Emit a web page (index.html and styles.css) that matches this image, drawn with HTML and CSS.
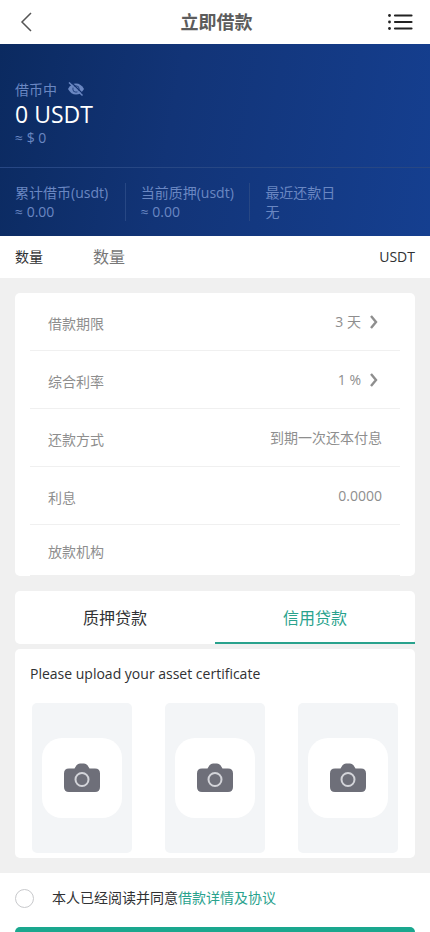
FILE: index.html
```html
<!DOCTYPE html>
<html lang="zh-CN">
<head>
<meta charset="utf-8">
<meta name="viewport" content="width=device-width, initial-scale=1">
<title>立即借款</title>
<link rel="stylesheet" href="styles.css">
</head>
<body>
<svg class="symbols" aria-hidden="true">
  <symbol id="camera" viewBox="0 0 36 30">
    <path fill="#6e6f79" d="M5 5.500h5.500l2-3.200Q14 .5 16 .5h4q2 0 3.500 1.800l2 3.200H31q5 0 5 5V24q0 5-5 5H5q-5 0-5-5V10.500q0-5 5-5z"/>
    <circle cx="18" cy="16.500" r="6.500" fill="none" stroke="#d3d4d9" stroke-width="2"/>
  </symbol>
  <symbol id="chevron" viewBox="0 0 8 14">
    <path d="M1 1l5 6-5 6" fill="none" stroke="#8e8e8e" stroke-width="2.400"/>
  </symbol>
</svg>
<div class="app">
  <header class="topbar">
    <button class="icon-button" type="button" aria-label="返回">
      <svg width="12" height="20" viewBox="0 0 12 20"><path d="M11 1L2 10l9 9" fill="none" stroke="#555" stroke-width="1.500"/></svg>
    </button>
    <h1>立即借款</h1>
    <button class="icon-button" type="button" aria-label="借款记录">
      <svg width="25" height="18" viewBox="0 0 25 18"><g stroke="#222" stroke-width="2.200" stroke-linecap="round"><path d="M7 2.500h16.500M7 9h16.500M7 15.500h16.500"/></g><g fill="#222"><circle cx="1.500" cy="2.500" r="1.400"/><circle cx="1.500" cy="9" r="1.400"/><circle cx="1.500" cy="15.500" r="1.400"/></g></svg>
    </button>
  </header>
  <main>
    <section class="hero">
      <div class="balance">
        <div class="balance-label">借币中
          <button class="eye" type="button" aria-label="隐藏金额">
            <svg width="16" height="16" viewBox="0 0 16 16"><path d="M0 7Q3 1.500 8 1.500T16 7Q13 12.500 8 12.500T0 7z" fill="#6a87c2"/><circle cx="8" cy="7" r="3.200" fill="none" stroke="#12316f" stroke-width=".8"/><path d="M2.400-.4L15.600 12.600" stroke="#12316f" stroke-width="1.400"/><path d="M1 .5L14.500 13.500" stroke="#6a87c2" stroke-width="1.500"/></svg>
          </button>
        </div>
        <strong>0 USDT</strong>
        <div>≈ $ 0</div>
      </div>
      <div class="stats">
        <div class="stat"><div>累计借币(usdt)</div><div>≈ 0.00</div></div>
        <div class="stat"><div>当前质押(usdt)</div><div>≈ 0.00</div></div>
        <div class="stat"><div>最近还款日</div><div>无</div></div>
      </div>
    </section>
    <div class="amount">
      <label for="amount">数量</label>
      <input id="amount" type="text" placeholder="数量">
      <span>USDT</span>
    </div>
    <section class="card terms">
      <div class="row"><span>借款期限</span><button class="value" type="button">3 天<svg width="8" height="14"><use href="#chevron"/></svg></button></div>
      <div class="row"><span>综合利率</span><button class="value" type="button">1 %<svg width="8" height="14"><use href="#chevron"/></svg></button></div>
      <div class="row"><span>还款方式</span><span class="value">到期一次还本付息</span></div>
      <div class="row"><span>利息</span><span class="value">0.0000</span></div>
      <div class="row last"><span>放款机构</span></div>
    </section>
    <div class="card tabs" role="tablist">
      <button type="button" role="tab" aria-selected="false">质押贷款</button>
      <button type="button" role="tab" aria-selected="true">信用贷款</button>
    </div>
    <section class="card upload">
      <h2>Please upload your asset certificate</h2>
      <div class="tiles">
        <button type="button" aria-label="上传图片 1"><span class="pad"><svg width="36" height="30"><use href="#camera"/></svg></span></button>
        <button type="button" aria-label="上传图片 2"><span class="pad"><svg width="36" height="30"><use href="#camera"/></svg></span></button>
        <button type="button" aria-label="上传图片 3"><span class="pad"><svg width="36" height="30"><use href="#camera"/></svg></span></button>
      </div>
    </section>
    <section class="confirm">
      <div class="agree">
        <input id="agree" type="checkbox">
        <div><label for="agree">本人已经阅读并同意</label><a href="#agreement">借款详情及协议</a></div>
      </div>
      <button class="submit" type="button" aria-label="立即借款"></button>
    </section>
  </main>
</div>
</body>
</html>
```
FILE: styles.css
```css
* {
  box-sizing: border-box;
}

body {
  margin: 0;
  background: #f0f0f0;
  color: #303133;
  font: 14px/20px "Open Sans", "Noto Sans CJK SC", sans-serif;
}

button,
input {
  font: inherit;
  color: inherit;
  padding: 0;
  border: 0;
  background: none;
}

button svg {
  display: block;
}

.symbols {
  display: none;
}

.app {
  display: flex;
  flex-direction: column;
  height: 100vh;
}

.topbar {
  display: grid;
  flex-shrink: 0;
  grid-template-columns: 1fr auto 1fr;
  align-items: center;
  height: 44px;
  padding: 0 17px 0 20px;
  background: #fff;
}

.icon-button:last-child {
  justify-self: end;
}

.icon-button:first-child {
  justify-self: start;
}

.topbar h1 {
  margin: 0;
  font-size: 18px;
  line-height: 24px;
  font-weight: 700;
  color: #5c5c5c;
}

main {
  flex: 1;
  min-height: 0;
  overflow-y: auto;
  scrollbar-width: none;
}

.hero {
  background: linear-gradient(100deg, #0b2a60, #123477 40%, #153f90);
  color: #6a87c2;
}

.balance {
  padding: 36px 15px 19px;
}

.balance-label {
  display: flex;
  align-items: center;
  gap: 11px;
}

.balance strong {
  display: block;
  font-size: 23px;
  line-height: 28px;
  font-weight: 400;
  color: #fff;
}

.stats {
  display: flex;
  padding: 15px 0;
  border-top: 1px solid #274784;
}

.stat {
  width: 29%;
  padding-left: 15px;
  line-height: 19px;
  white-space: nowrap;
}

.stat + .stat {
  border-left: 1px solid #274784;
}

.amount {
  display: flex;
  align-items: center;
  height: 42px;
  padding: 0 15px;
  background: #fff;
}

.amount label {
  width: 78px;
}

.amount input {
  flex: 1;
  min-width: 0;
  font-size: 16px;
  outline: none;
}

.amount input::placeholder {
  color: #777;
}

.card {
  margin: 15px 15px 0;
  border-radius: 5px;
  background: #fff;
}

.terms {
  padding: 0 15px;
  color: #8e8e8e;
}

.row {
  display: flex;
  align-items: center;
  justify-content: space-between;
  height: 58px;
  padding: 4px 18px 0;
  border-bottom: 1px solid #f0f0f0;
}

.row .value {
  display: flex;
  align-items: center;
  gap: 9px;
  margin-bottom: 4px;
}

.row button.value {
  margin-right: 4px;
}

.row.last {
  height: 51px;
}

.tabs {
  display: flex;
}

.tabs button {
  flex: 1;
  height: 53px;
  padding-top: 2px;
  border-bottom: 2px solid transparent;
  font-size: 16px;
}

.tabs [aria-selected="true"] {
  border-color: #29a28d;
  color: #29a28d;
}

.upload {
  margin-top: 5px;
  padding: 15px 17px 5px;
}

.upload h2 {
  margin: 0 -2px 19px;
  font-size: 14px;
  font-weight: 400;
}

.tiles {
  display: flex;
  justify-content: space-between;
}

.tiles button {
  display: grid;
  place-items: center;
  width: 100px;
  height: 150px;
  border-radius: 5px;
  background: #f3f5f7;
}

.pad {
  display: grid;
  place-items: center;
  width: 80px;
  height: 80px;
  border-radius: 20px;
  background: #fff;
}

.confirm {
  margin-top: 15px;
  padding: 15px;
  background: #fff;
}

.agree {
  display: flex;
  align-items: center;
  gap: 18px;
  margin-bottom: 19px;
}

.agree input {
  appearance: none;
  width: 19px;
  height: 19px;
  margin: 0;
  border: 1px solid #c8c9cc;
  border-radius: 50%;
}

.agree input:checked {
  background: #1aa78e;
}

.agree a {
  color: #29a28d;
  text-decoration: none;
}

.submit {
  display: block;
  width: 100%;
  height: 44px;
  border-radius: 5px;
  background: #1aa78e;
}
```
